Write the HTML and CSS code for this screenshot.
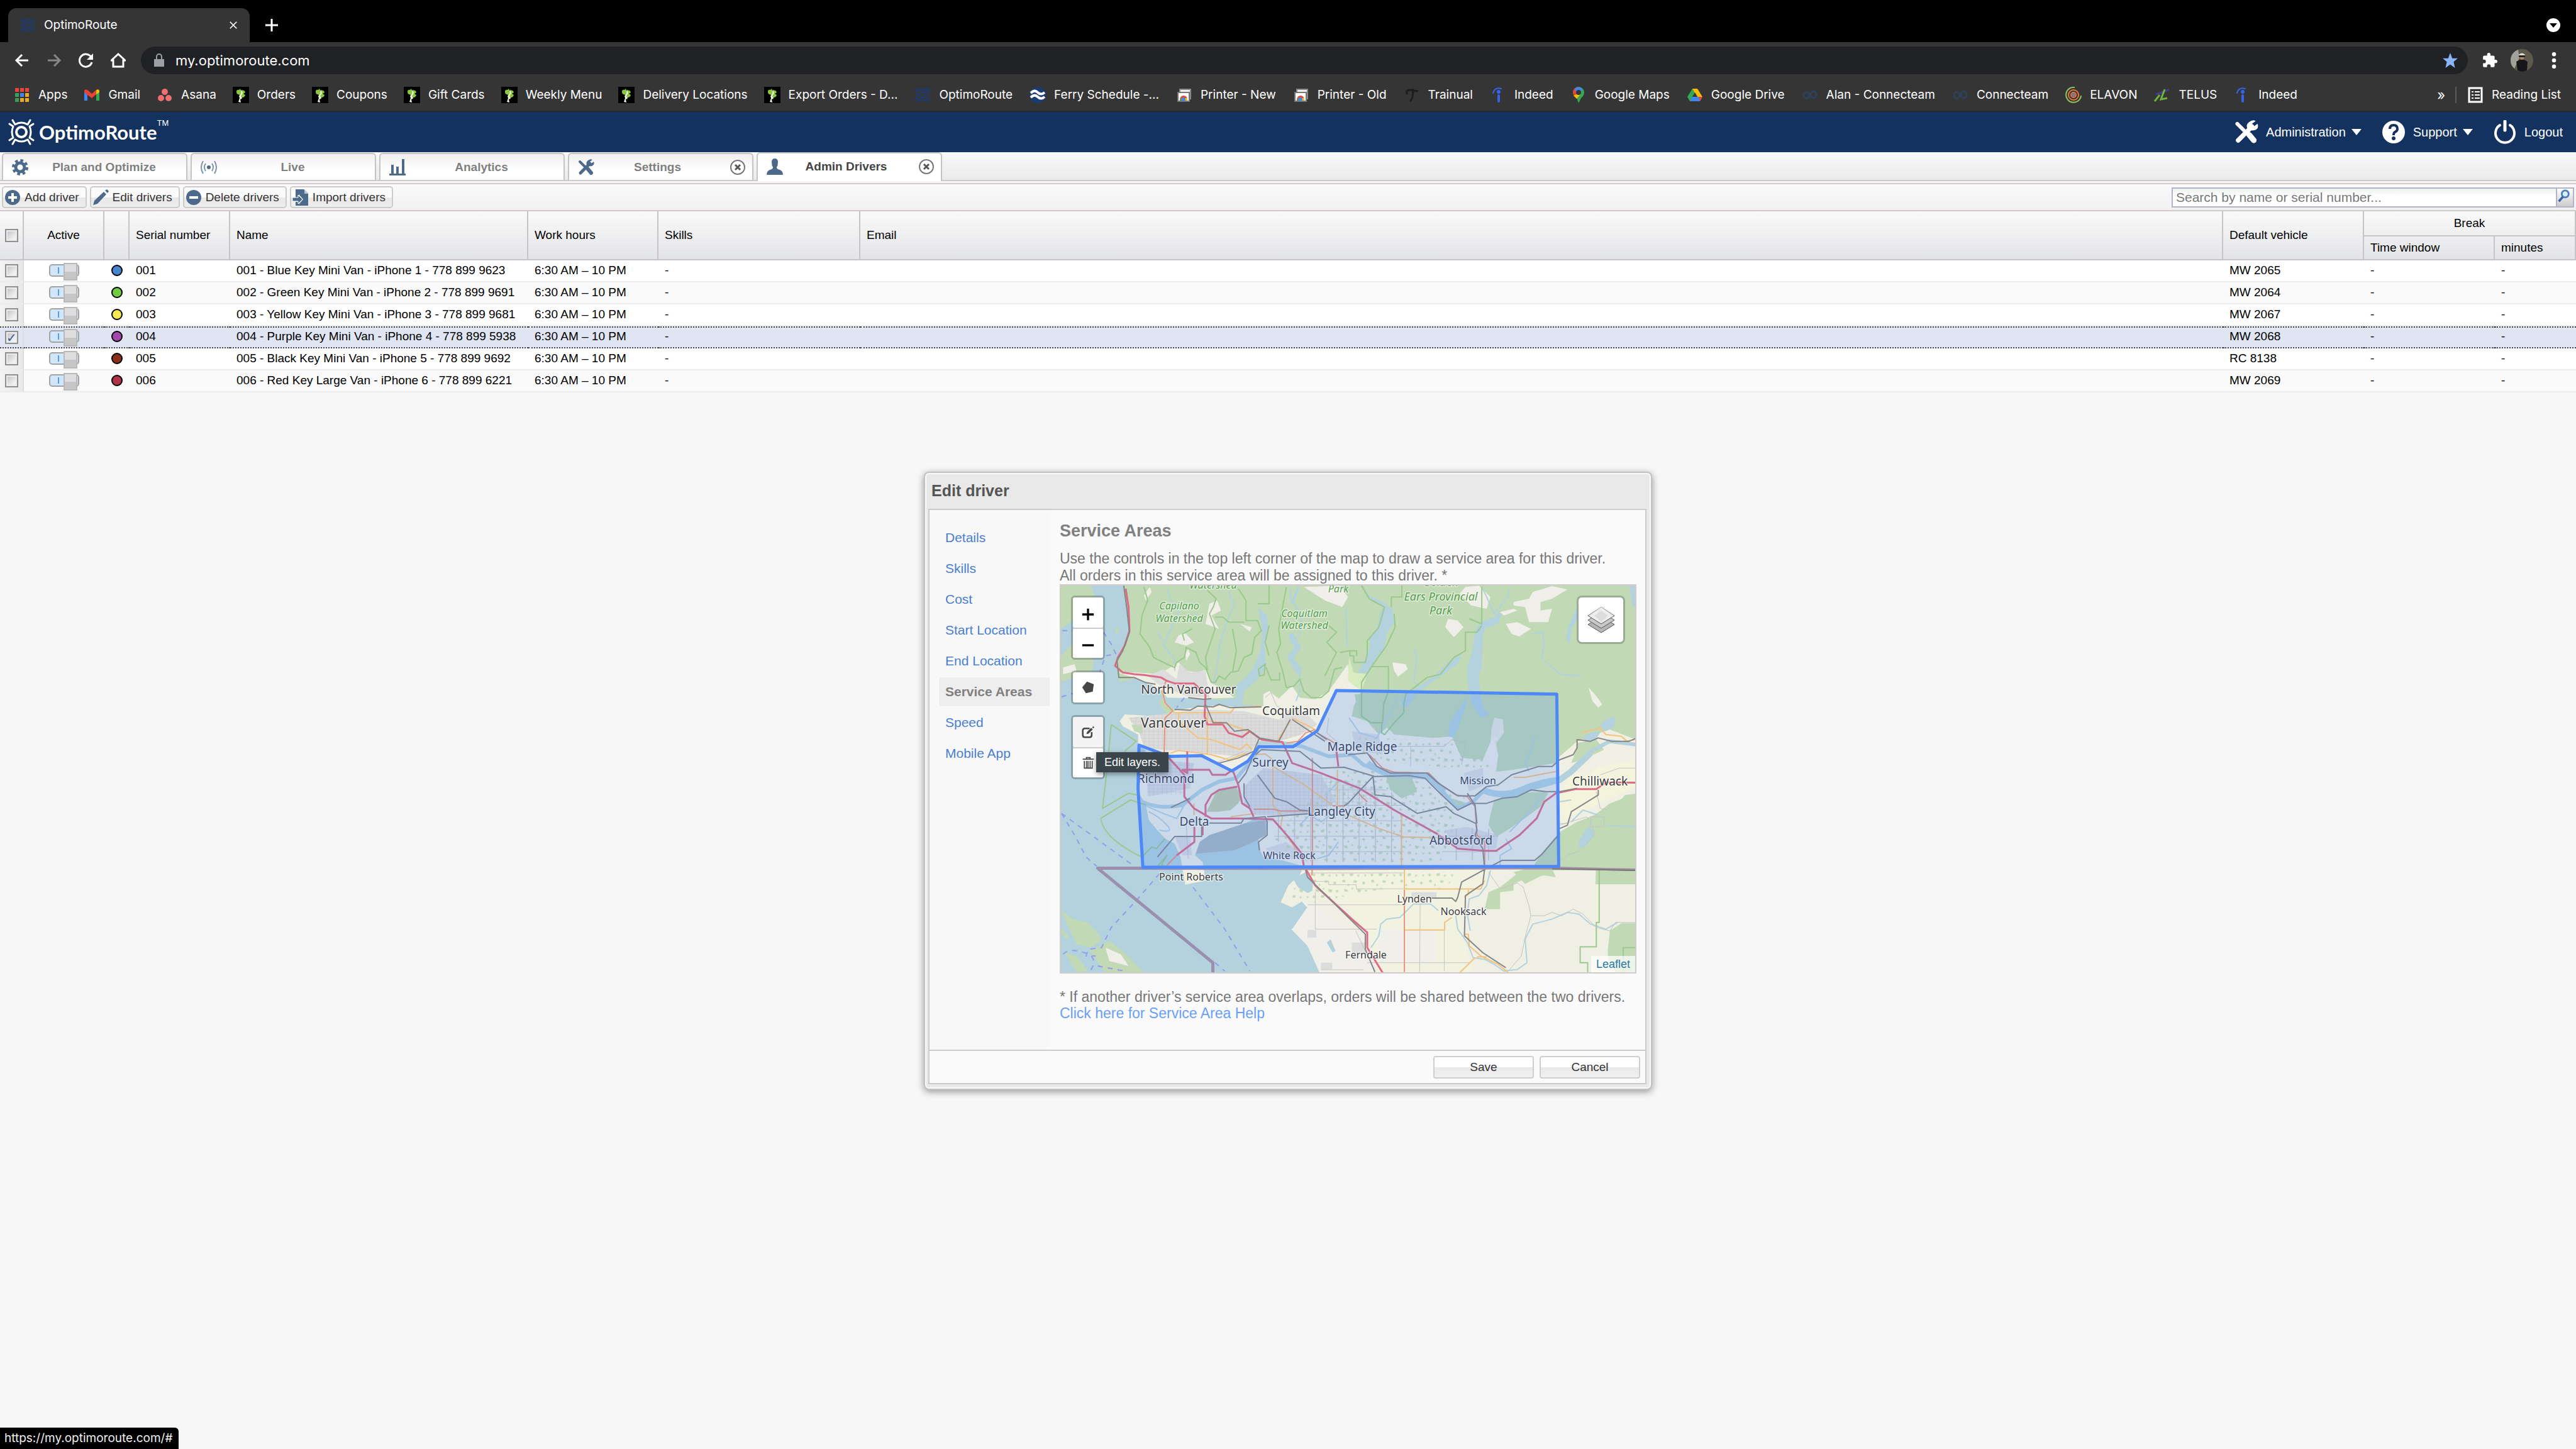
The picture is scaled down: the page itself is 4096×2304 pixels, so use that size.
FILE: index.html
```html
<!DOCTYPE html>
<html lang="en">
<head>
<meta charset="utf-8">
<title>OptimoRoute</title>
<link rel="stylesheet" href="styles.css">
</head>
<body>
<svg class="defs" aria-hidden="true">
  <symbol id="i-optimo" viewBox="0 0 42 42"><g fill="none" stroke="currentColor" stroke-width="3" stroke-linecap="round" stroke-linejoin="round"><circle cx="21" cy="21" r="8" stroke-width="4"/><path d="M7 2L11 9Q21 3 31 9L35 2M7 40L11 33Q21 39 31 33L35 40M2 8L8 12Q4 21 8 30L2 34M40 8L34 12Q38 21 34 30L40 34"/></g></symbol>
  <symbol id="i-q" viewBox="0 0 26 26"><path d="M0 0h26v26H0z" fill="#000"/><path d="M6 8Q6 4 10 5L12 3 13 6Q19 4 20 9L17 11 20 13Q19 17 15 17L14 20 11 17 11 13 9 12Q6 12 6 8Z" fill="#8cc63f"/><path d="M14 4L16 10 13 15 15 18 12 20 13 25 9 24 11 18 10 15 13 11Z" fill="#e8f0dc"/></symbol>
  <symbol id="i-tools" viewBox="0 0 26 26"><g fill="none" stroke="currentColor" stroke-linecap="round"><path d="M4 22L19 7" stroke-width="5"/><path d="M3 4L11 12" stroke-width="4"/><path d="M16 16L21 22" stroke-width="6"/></g><path d="M16 2Q20-1 23 1L19 4 21 7 25 4Q27 9 22 11 17 12 14 9 12 5 16 2Z" fill="currentColor"/></symbol>
  <symbol id="i-print" viewBox="0 0 26 26"><path d="M6 4h17v15H6z" fill="#eee" stroke="#888" stroke-width="2"/><path d="M3 9h18v14H3z" fill="#fff" stroke="#777" stroke-width="2"/><path d="M6 22Q6 14 12 14T18 22Z" fill="#dd4b3e"/><path d="M6 22l3-5 3 5z" fill="#3aa757"/><path d="M13 18h5v4h-5z" fill="#f4c20d"/><circle cx="12" cy="20" r="3" fill="#4286f5"/></symbol>
  <symbol id="i-indeed" viewBox="0 0 26 26"><g fill="none" stroke="#3564e8" stroke-linecap="round"><path d="M14 14V23" stroke-width="4"/><path d="M5 10Q8 0 18 3" stroke-width="2"/></g><circle cx="14" cy="8" r="3" fill="#3564e8"/></symbol>
  <symbol id="i-loop" viewBox="0 0 26 26"><path d="M13 13Q9 6 5 9 1 13 5 18 9 21 13 13 17 5 21 8 25 13 21 17 17 20 13 13Z" fill="none" stroke="#2d4157" stroke-width="3"/></symbol>
  <symbol id="i-close" viewBox="0 0 26 26"><circle cx="13" cy="13" r="11" fill="#fff" stroke="#777" stroke-width="2"/><path d="M9 9L17 17M17 9L9 17" stroke="#555" stroke-width="3"/></symbol>
  <symbol id="i-tri" viewBox="0 0 16 12"><path d="M0 1H16L8 11Z" fill="#fff"/></symbol>
</svg>

<header class="chrome">
  <div class="tabstrip">
    <div class="btab"><svg class="fav navy"><use href="#i-optimo"/></svg><span>OptimoRoute</span>
      <button class="ib" aria-label="Close tab"><svg viewBox="0 0 16 16" width="14" height="14"><path d="M2 2L14 14M14 2L2 14" stroke="#fff" stroke-width="2"/></svg></button></div>
    <button class="ib newtab" aria-label="New tab"><svg viewBox="0 0 20 20" width="20" height="20"><path d="M10 0V20M0 10H20" stroke="#fff" stroke-width="3"/></svg></button>
    <button class="ib tabsearch" aria-label="Search tabs"><svg viewBox="0 0 24 24" width="24" height="24"><circle cx="12" cy="12" r="11" fill="#fff"/><path d="M6 9H18L12 16Z" fill="#000"/></svg></button>
  </div>
  <div class="navbar">
    <button class="ib" aria-label="Back"><svg viewBox="0 0 24 24"><path d="M22 12H3M12 3L3 12 12 21" fill="none" stroke="#fff" stroke-width="3"/></svg></button>
    <button class="ib" aria-label="Forward"><svg viewBox="0 0 24 24"><path d="M2 12H21M12 3L21 12 12 21" fill="none" stroke="#888" stroke-width="3"/></svg></button>
    <button class="ib" aria-label="Reload"><svg viewBox="0 0 24 24"><path d="M20 7A10 10 0 1 0 21 15" fill="none" stroke="#fff" stroke-width="3"/><path d="M23 1V11H13Z" fill="#fff"/></svg></button>
    <button class="ib" aria-label="Home"><svg viewBox="0 0 24 24"><path d="M1 12L12 2 23 12H20V22H4V12Z" fill="none" stroke="#fff" stroke-width="3"/></svg></button>
    <div class="omni">
      <svg viewBox="0 0 18 22" width="18" height="22"><path d="M1 9h16v12H1z" fill="#9aa0a6"/><path d="M5 9V5a4 4 0 0 1 8 0v4" fill="none" stroke="#9aa0a6" stroke-width="2"/></svg>
      <input class="url" type="text" aria-label="Address" value="my.optimoroute.com">
      <svg viewBox="0 0 24 24" width="26" height="26"><path d="M12 1L15 9 23 9 17 14 19 23 12 18 5 23 7 14 1 9 9 9Z" fill="#8ab4f8"/></svg>
    </div>
    <div class="navend">
      <button class="ib" aria-label="Extensions"><svg viewBox="0 0 24 24"><path d="M20.500 11H19V7a2 2 0 0 0-2-2h-4V3.500a2.500 2.500 0 0 0-5 0V5H4a2 2 0 0 0-2 2v3.800h1.500a2.700 2.700 0 0 1 0 5.400H2V20a2 2 0 0 0 2 2h3.800v-1.500a2.700 2.700 0 0 1 5.400 0V22H17a2 2 0 0 0 2-2v-4h1.500a2.500 2.500 0 0 0 0-5z" fill="#fff"/></svg></button>
      <button class="ib" aria-label="Profile"><svg class="avatar" viewBox="0 0 36 36"><circle cx="18" cy="18" r="18" fill="#5d5a4c"/><path d="M0 18A18 18 0 0 1 12 1L14 14 6 31Q0 26 0 18Z" fill="#a3a19c"/><path d="M9 20Q18 13 27 20L26 34Q18 38 11 34Z" fill="#17161a"/><ellipse cx="18" cy="12" rx="4" ry="5" fill="#b08468"/><path d="M13 9Q18 4 23 9V11H13Z" fill="#ddd"/><path d="M13 10h10v3H13z" fill="#222"/></svg></button>
      <button class="ib" aria-label="Menu"><svg viewBox="0 0 24 24"><g fill="#fff"><circle cx="12" cy="3" r="3"/><circle cx="12" cy="12" r="3"/><circle cx="12" cy="21" r="3"/></g></svg></button>
    </div>
  </div>
  <nav class="bookmarks" aria-label="Bookmarks">
    <a href="#"><svg class="bi" viewBox="0 0 26 26"><g fill="#e8453c"><path d="M2 2h6v6H2zM10 2h6v6h-6zM18 2h6v6h-6z"/></g><path d="M2 10h6v6H2zM2 18h6v6H2z" fill="#3a9e57"/><path d="M10 10h6v6h-6z" fill="#4587f0"/><path d="M18 10h6v6h-6zM10 18h6v6h-6zM18 18h6v6h-6z" fill="#e8a92e"/></svg>Apps</a>
    <a href="#"><svg class="bi" viewBox="0 0 26 26"><path d="M1 6V22H6V10Z" fill="#4285f4"/><path d="M25 6V22H20V10Z" fill="#34a853"/><path d="M1 6Q2 3 6 5L13 11 20 5V12L13 18 1 9Z" fill="#ea4335"/><path d="M20 5Q24 3 25 6V9L20 12Z" fill="#fbbc04"/></svg>Gmail</a>
    <a href="#"><svg class="bi" viewBox="0 0 26 26"><g fill="#ee6f6f"><circle cx="13" cy="8" r="5"/><circle cx="7" cy="18" r="5"/><circle cx="19" cy="18" r="5"/></g></svg>Asana</a>
    <a href="#"><svg class="bi"><use href="#i-q"/></svg>Orders</a>
    <a href="#"><svg class="bi"><use href="#i-q"/></svg>Coupons</a>
    <a href="#"><svg class="bi"><use href="#i-q"/></svg>Gift Cards</a>
    <a href="#"><svg class="bi"><use href="#i-q"/></svg>Weekly Menu</a>
    <a href="#"><svg class="bi"><use href="#i-q"/></svg>Delivery Locations</a>
    <a href="#"><svg class="bi"><use href="#i-q"/></svg>Export Orders - D...</a>
    <a href="#"><svg class="bi navy"><use href="#i-optimo"/></svg>OptimoRoute</a>
    <a href="#"><svg class="bi" viewBox="0 0 26 26"><circle cx="13" cy="13" r="13" fill="#1b3c70"/><path d="M2 10Q8 4 13 9T24 9M2 17Q8 11 13 16T24 16" fill="none" stroke="#fff" stroke-width="4"/></svg>Ferry Schedule -...</a>
    <a href="#"><svg class="bi"><use href="#i-print"/></svg>Printer - New</a>
    <a href="#"><svg class="bi"><use href="#i-print"/></svg>Printer - Old</a>
    <a href="#"><svg class="bi" viewBox="0 0 26 26"><path d="M6 12Q2 6 9 5L23 7M15 3Q15 20 10 23" fill="none" stroke="#1d1d1d" stroke-width="3"/></svg>Trainual</a>
    <a href="#"><svg class="bi"><use href="#i-indeed"/></svg>Indeed</a>
    <a href="#"><svg class="bi" viewBox="0 0 26 26"><path d="M4 9A9 9 0 0 1 22 9Q22 14 17 18L13 26 10 18Q4 14 4 9Z" fill="#34a853"/><path d="M4 9A9 9 0 0 1 13 0L13 9 6 15Z" fill="#ea4335"/><path d="M7 3A9 9 0 0 1 20 4L10 12Z" fill="#4285f4"/><path d="M10 12L5 14 10 19 16 12Z" fill="#fbbc04"/><circle cx="13" cy="9" r="4" fill="#353535"/></svg>Google Maps</a>
    <a href="#"><svg class="bi" viewBox="0 0 26 26"><path d="M9 3H17L9 17 5 23 1 16Z" fill="#34a853"/><path d="M9 3H17L25 16H17Z" fill="#fbbc04"/><path d="M5 23L9 16H25L21 23Z" fill="#4285f4"/><path d="M19 16H25L21 23Z" fill="#ea4335"/><path d="M13 9L9 16H17Z" fill="#353535"/></svg>Google Drive</a>
    <a href="#"><svg class="bi"><use href="#i-loop"/></svg>Alan - Connecteam</a>
    <a href="#"><svg class="bi"><use href="#i-loop"/></svg>Connecteam</a>
    <a href="#"><svg class="bi" viewBox="0 0 26 26"><g fill="none"><path d="M15 1A12 12 0 1 0 25 14" stroke="#93c65a" stroke-width="2"/><circle cx="13" cy="13" r="8" stroke="#e8743b" stroke-width="2"/><circle cx="13" cy="13" r="4" stroke="#e8743b" stroke-width="2"/></g><circle cx="13" cy="13" r="3" fill="#7b7b8a"/></svg>ELAVON</a>
    <a href="#"><svg class="bi" viewBox="0 0 26 26"><path d="M3 12L16 8 24 4" stroke="#4b3a86" stroke-width="3" fill="none"/><path d="M17 4L11 20 21 18M1 23L9 13" stroke="#6cb33f" stroke-width="3" fill="none"/></svg>TELUS</a>
    <a href="#"><svg class="bi"><use href="#i-indeed"/></svg>Indeed</a>
    <span class="more">»</span>
    <a class="reading" href="#"><svg class="bi" viewBox="0 0 26 26"><path d="M3 2h20v22H3z" fill="none" stroke="#fff" stroke-width="3"/><path d="M7 8h3M7 13h3M7 18h3M12 8h8M12 13h8M12 18h8" stroke="#fff" stroke-width="2"/></svg>Reading List</a>
  </nav>
</header>

<div class="app">
  <header class="brandbar">
    <a class="brand" href="#"><svg class="logo"><use href="#i-optimo"/></svg><span class="brandname">OptimoRoute</span><span class="tm">TM</span></a>
    <div class="account">
      <button><svg class="ai"><use href="#i-tools"/></svg>Administration<svg class="tri"><use href="#i-tri"/></svg></button>
      <button><svg class="ai" viewBox="0 0 38 38"><circle cx="19" cy="19" r="18" fill="#fff"/><path d="M13 14Q13 8 19 8T25 14Q25 17 21 19 19 20 19 24" fill="none" stroke="#13325f" stroke-width="4"/><circle cx="19" cy="29" r="3" fill="#13325f"/></svg>Support<svg class="tri"><use href="#i-tri"/></svg></button>
      <button><svg class="ai" viewBox="0 0 38 38"><path d="M11 8A15 15 0 1 0 27 8" fill="none" stroke="#fff" stroke-width="4" stroke-linecap="round"/><path d="M19 2V16" stroke="#fff" stroke-width="5" stroke-linecap="round"/></svg>Logout</button>
    </div>
  </header>

  <nav class="tabs" aria-label="Sections">
    <div class="tab"><svg class="ti" viewBox="0 0 26 26"><circle cx="13" cy="13" r="7" fill="none" stroke="currentColor" stroke-width="5"/><circle cx="13" cy="13" r="11" fill="none" stroke="currentColor" stroke-width="4" stroke-dasharray="4.600 4.040"/></svg><a href="#">Plan and Optimize</a></div>
    <div class="tab"><svg class="ti" viewBox="0 0 26 26"><circle cx="13" cy="13" r="3" fill="currentColor"/><path d="M8 7Q4 13 8 19M18 7Q22 13 18 19M4 3Q-2 13 4 23M22 3Q28 13 22 23" fill="none" stroke="#7c93ab" stroke-width="2"/></svg><a href="#">Live</a></div>
    <div class="tab"><svg class="ti" viewBox="0 0 26 26"><path d="M0 25H26M5 25V9M13 25V12M22 25V0" stroke="currentColor" stroke-width="4" fill="none"/></svg><a href="#">Analytics</a></div>
    <div class="tab"><svg class="ti"><use href="#i-tools"/></svg><a href="#">Settings</a><button class="ib" aria-label="Close Settings"><svg class="tx"><use href="#i-close"/></svg></button></div>
    <div class="tab active"><svg class="ti" viewBox="0 0 26 26"><path d="M13 0Q18 0 18 6 18 11 16 14 16 17 21 18 26 20 26 26H0Q0 20 5 18 10 17 10 14 8 11 8 6 8 0 13 0Z" fill="currentColor"/></svg><a href="#">Admin Drivers</a><button class="ib" aria-label="Close Admin Drivers"><svg class="tx"><use href="#i-close"/></svg></button></div>
  </nav>

  <div class="toolbar">
    <button class="tb"><svg class="ti" viewBox="0 0 26 26"><circle cx="13" cy="13" r="12" fill="currentColor"/><path d="M13 6V20M6 13H20" stroke="#fff" stroke-width="4"/></svg>Add driver</button>
    <button class="tb"><svg class="ti" viewBox="0 0 26 26"><path d="M1 25L3 18 18 4 22 8 8 23Z" fill="currentColor"/><path d="M20 2L23 0 26 3 24 6Z" fill="currentColor"/></svg>Edit drivers</button>
    <button class="tb"><svg class="ti" viewBox="0 0 26 26"><circle cx="13" cy="13" r="12" fill="currentColor"/><path d="M6 13H20" stroke="#fff" stroke-width="4"/></svg>Delete drivers</button>
    <button class="tb"><svg class="ti" viewBox="0 0 26 26"><path d="M5 0H18L25 7V26H5V20H10V24L17 16 10 8V13H5Z" fill="currentColor"/><path d="M19 0V7H26" fill="#b9c5d2"/><path d="M0 13H9V9L16 16 9 23V19H0Z" fill="currentColor" stroke="#fff"/></svg>Import drivers</button>
    <div class="search"><input type="text" aria-label="Search drivers" placeholder="Search by name or serial number..."><button aria-label="Search"><svg viewBox="0 0 24 24" width="22" height="24"><circle cx="14" cy="8" r="6" fill="#dcecf8" stroke="#4a7cc0" stroke-width="3"/><path d="M10 13L3 21" stroke="#3a62ab" stroke-width="4"/></svg></button></div>
  </div>

  <table class="grid">
    <colgroup><col class="c-check"><col class="c-active"><col class="c-dot"><col class="c-serial"><col class="c-name"><col class="c-hours"><col class="c-skills"><col><col class="c-vehicle"><col class="c-window"><col class="c-min"></colgroup>
    <thead>
      <tr><th rowspan="2" class="ck"><input type="checkbox" aria-label="Select all"></th><th rowspan="2" class="mid">Active</th><th rowspan="2"></th><th rowspan="2">Serial number</th><th rowspan="2">Name</th><th rowspan="2">Work hours</th><th rowspan="2">Skills</th><th rowspan="2">Email</th><th rowspan="2">Default vehicle</th><th colspan="2" class="mid group">Break</th></tr>
      <tr><th>Time window</th><th>minutes</th></tr>
    </thead>
    <tbody>
      <tr><td class="ck"><input type="checkbox" aria-label="Select 001"></td><td class="mid"><input class="sw" type="checkbox" role="switch" checked aria-label="001 active"></td><td class="mid"><i class="dot blue"></i></td><td>001</td><td>001 - Blue Key Mini Van - iPhone 1 - 778 899 9623</td><td>6:30 AM – 10 PM</td><td>-</td><td></td><td>MW 2065</td><td>-</td><td>-</td></tr>
      <tr><td class="ck"><input type="checkbox" aria-label="Select 002"></td><td class="mid"><input class="sw" type="checkbox" role="switch" checked aria-label="002 active"></td><td class="mid"><i class="dot green"></i></td><td>002</td><td>002 - Green Key Mini Van - iPhone 2 - 778 899 9691</td><td>6:30 AM – 10 PM</td><td>-</td><td></td><td>MW 2064</td><td>-</td><td>-</td></tr>
      <tr><td class="ck"><input type="checkbox" aria-label="Select 003"></td><td class="mid"><input class="sw" type="checkbox" role="switch" checked aria-label="003 active"></td><td class="mid"><i class="dot yellow"></i></td><td>003</td><td>003 - Yellow Key Mini Van - iPhone 3 - 778 899 9681</td><td>6:30 AM – 10 PM</td><td>-</td><td></td><td>MW 2067</td><td>-</td><td>-</td></tr>
      <tr class="sel"><td class="ck"><input type="checkbox" checked aria-label="Select 004"></td><td class="mid"><input class="sw" type="checkbox" role="switch" checked aria-label="004 active"></td><td class="mid"><i class="dot purple"></i></td><td>004</td><td>004 - Purple Key Mini Van - iPhone 4 - 778 899 5938</td><td>6:30 AM – 10 PM</td><td>-</td><td></td><td>MW 2068</td><td>-</td><td>-</td></tr>
      <tr><td class="ck"><input type="checkbox" aria-label="Select 005"></td><td class="mid"><input class="sw" type="checkbox" role="switch" checked aria-label="005 active"></td><td class="mid"><i class="dot brown"></i></td><td>005</td><td>005 - Black Key Mini Van - iPhone 5 - 778 899 9692</td><td>6:30 AM – 10 PM</td><td>-</td><td></td><td>RC 8138</td><td>-</td><td>-</td></tr>
      <tr><td class="ck"><input type="checkbox" aria-label="Select 006"></td><td class="mid"><input class="sw" type="checkbox" role="switch" checked aria-label="006 active"></td><td class="mid"><i class="dot red"></i></td><td>006</td><td>006 - Red Key Large Van - iPhone 6 - 778 899 6221</td><td>6:30 AM – 10 PM</td><td>-</td><td></td><td>MW 2069</td><td>-</td><td>-</td></tr>
    </tbody>
  </table>

  <div class="overlay">
    <section class="dialog" role="dialog" aria-labelledby="dlg-title">
      <h1 id="dlg-title">Edit driver</h1>
      <div class="dbody">
        <div class="dcols">
          <nav class="side" aria-label="Driver sections"><a href="#">Details</a><a href="#">Skills</a><a href="#">Cost</a><a href="#">Start Location</a><a href="#">End Location</a><a href="#" class="on">Service Areas</a><a href="#">Speed</a><a href="#">Mobile App</a></nav>
          <div class="main">
            <h2>Service Areas</h2>
            <p class="intro">Use the controls in the top left corner of the map to draw a service area for this driver.<br>All orders in this service area will be assigned to this driver. *</p>
            <div class="map">
<svg class="mapart" viewBox="0 0 913 615" preserveAspectRatio="xMidYMid slice">
  <defs>
    <pattern id="streets" width="46" height="40" patternUnits="userSpaceOnUse"><path d="M0 1H46M1 0V40M0 22H46M24 0V40" fill="none" stroke="#c6c6c6" stroke-width="3"/></pattern>
    <pattern id="rural" width="84" height="92" patternUnits="userSpaceOnUse"><path d="M0 2H84M2 0V92" fill="none" stroke="#c2c2c2" stroke-width="4"/></pattern>
    <pattern id="woods" width="150" height="130" patternUnits="userSpaceOnUse"><path d="M8 10l14-5 6 12-12 6zM40 30l8 4-4 9-8-3zM70 8l18 4-6 12-14-4zM112 22l10-6 8 10-9 8zM20 60l16 4 4 14-18-4zM62 52l7 6-6 7-6-6zM88 60l22 6-8 16-12-4zM130 66l12 4-6 12-10-6zM10 98l12 6-6 12-9-6zM48 100l18-4 2 14-16 4zM92 104l8 4-4 9-9-4zM124 102l14 6-10 9z" fill="#c1d9b5"/></pattern>
  </defs>
  <rect width="913" height="615" fill="#b3d2dd"/>
  <g transform="translate(-15 -19) scale(.3061 .2667)">
    <path fill="#c1d9b5" d="M375 60L395 180 410 340 380 440 335 520 345 620 360 645 440 625 520 665 565 690 575 740 640 735 800 745 880 755 960 740 955 670 1010 620 1045 570 1080 480 1095 380 1090 290 1070 200 1120 250 1125 330 1105 430 1115 560 1060 640 1000 700 990 780 1100 790 1000 800 870 785 760 795 650 815 620 800 580 745 555 760 575 800 600 840 540 850 380 840 355 880 370 910 450 960 450 1020 490 1055 475 1100 450 1300 490 1380 505 1470 550 1530 590 1580 640 1610 670 1690 695 1855 800 1830 785 1720 745 1680 770 1600 820 1560 1000 1490 1050 1465 1120 1475 1115 1560 1075 1580 1080 1640 1100 1690 1200 1710 1310 1745 1290 1795 1230 1860 1190 1960 1250 1990 1300 1955 1335 2000 1330 2060 1245 2120 1330 2220 1385 2260 1400 2400 3060 2400 3060 60Z"/>
    <path fill="#c1d9b5" d="M40 60H200L225 130 170 210 100 290 50 330ZM40 500L110 420 180 440 220 520 210 580 50 645ZM45 2000L110 2060 190 2080 245 2150 260 2190 200 2230 130 2210 100 2140ZM200 2250L300 2190 380 2260 440 2330 480 2380 280 2380ZM70 2260L130 2280 190 2370 130 2380ZM45 2110L90 2160 80 2180 45 2140ZM340 320L355 340 340 360 328 340Z"/>
    <path fill="#efefe4" d="M345 590L440 625 520 665 575 700 600 740 800 745 950 740 900 700 830 650 800 575 760 590 700 580 660 530 560 600 440 590ZM1100 790L1100 720 1130 700 1180 745 1250 670 1290 740 1370 750 1440 700 1540 540 1545 610 1640 600 1610 700 1570 790 1560 850 1640 880 1700 960 1740 920 1850 960 1980 980 2080 970 2130 1030 2240 1110 2290 980 2320 1080 2310 1180 2460 1160 2620 1130 2640 1090 2730 1000 2900 930 3060 1000 3060 1310 2980 1320 2900 1420 2750 1480 2640 1560 2500 1750 2400 1780 2460 1850 2600 1770 3060 1770 3060 2400 1400 2400 1385 2260 1330 2220 1245 2120 1330 2060 1335 2000 1300 1955 1250 1990 1190 1960 1230 1860 1290 1795 1310 1745 1200 1710 1100 1690 1080 1640 1075 1580 1115 1560 1120 1475 1050 1465 1000 1490 820 1560 770 1600 745 1680 785 1720 800 1830 695 1855 670 1690 640 1610 590 1580 550 1530 505 1470 490 1380 450 1300 475 1100 490 1055 450 1020 450 960 370 910 355 880 380 840 540 850 600 840 650 815 760 795 870 785 1000 800Z"/>
    <path fill="#f1f2df" d="M1340 1770H2260L2250 1870 2160 1920 2120 2060 2140 2180 2200 2400H1700L1640 2150 1540 2000 1330 1840Z"/>
    <path fill="#f0efe9" d="M1340 1970L1540 2110 1640 2160 1700 2400H1400L1330 2220 1250 2120ZM1690 2120H2000V2320H1700Z"/>
    <path fill="#dcdcdc" d="M500 610L580 570 650 630 665 540 720 590 800 580 820 740 700 730 560 665ZM400 860L640 830 760 810 1000 820 1180 870 1250 800 1330 840 1380 900 1300 960 1180 1000 1080 990 1020 1090 880 1080 480 1040 460 960ZM490 1110L740 1130 720 1280 500 1330ZM1000 1270L1100 1160 1400 1200 1480 1360 1330 1440 1060 1440 1000 1370ZM1110 1640L1220 1600 1330 1700 1200 1705ZM1560 940L1700 960 1720 1080 1580 1050ZM2040 1530L2160 1510 2320 1560 2310 1640 2110 1640ZM2140 1190L2240 1160 2250 1260 2170 1300ZM1870 1900H2000V1930H1870ZM2800 1230L2900 1140 2940 1180 2850 1260ZM1330 2125H1375V2170H1330ZM1400 2320H1458V2360H1400ZM1560 2200H1630V2260H1560ZM640 1570L720 1570 730 1680 680 1680Z"/>
    <path fill="url(#streets)" opacity=".7" d="M400 860L640 830 760 830 1000 840 1180 870 1250 860 1330 900 1300 960 1180 1000 1080 990 1020 1090 880 1080 480 1040 460 960ZM490 1110L740 1130 680 1318 500 1318ZM1000 1270L1100 1160 1400 1200 1700 1280 1700 1400 1480 1400 1330 1440 1060 1440 1000 1370Z"/>
    <path fill="url(#rural)" d="M1100 1480L1500 1260 1660 1250 1820 1330 1830 1720H1350L1180 1600ZM2030 1520H2320V1710H2030Z"/>
    <path fill="url(#woods)" d="M1140 1580L1500 1180 1660 1150 2150 1330 2020 1720H1330ZM1340 1780L2120 1780 2040 1880 1880 1860 1600 1900 1400 1960 1250 1960 1260 1850ZM1600 980L2200 1000 2300 1180 2080 1160 1600 1100Z"/>
    <path fill="#f0eee8" d="M1310 80L1500 72 1540 140 1510 200 1420 160ZM820 180L860 160 880 220 830 250 870 330 800 300ZM660 370L690 350 740 410 700 430 640 410ZM710 450L720 480 700 520 695 480ZM480 130L510 80 520 110 490 160ZM980 300L1040 320 1030 345ZM2150 80L2220 72 2280 140 2260 210 2180 190 2120 120ZM2060 270L2110 280 2140 320 2090 380 2045 320ZM2400 170L2480 150 2500 110 2600 75 2680 95 2600 150 2540 170 2540 220 2600 210 2580 290 2480 290 2460 200 2400 190ZM2360 300L2420 290 2490 330 2430 375 2390 360ZM2330 230L2400 210 2420 220 2350 250ZM1770 530L1840 540 1850 570 1800 615 1780 580ZM2790 680L2830 730 2860 780 2840 800 2810 760ZM2290 880L2340 880 2350 960 2300 1000ZM60 560L120 540 130 580 60 600ZM280 2230L360 2270 400 2340 300 2310Z"/>
    <path fill="#c1d9b5" d="M1575 720L1780 700 2620 720 2625 1080 2500 1130 2400 1170 2320 1180 2345 1000 2290 960 2240 1110 2130 1100 2080 970 1980 980 1780 960 1730 900 1660 890 1590 850Z"/>
    <path fill="#f0eee8" opacity=".8" d="M2300 860L2345 870 2350 950 2310 1010 2320 1090 2300 1170 2250 1100 2280 1010 2285 930Z"/>
    <path fill="#c1d9b5" d="M2280 1440L2300 1350 2400 1310 2560 1300 2580 1310 2540 1390 2470 1450 2380 1520 2310 1570 2270 1500ZM2500 1750L2550 1660 2640 1540 2730 1480 2820 1440 2900 1370 3040 1310V1755H2600ZM2330 1870L2440 1770 2600 1760 2620 1810 2560 1800 2480 1810 2400 1850 2400 1890 2330 1900V2000H2250L2270 1900ZM2828 1770H3040V1852H2825ZM2890 2240L2900 2130 2960 2085H3040V2380H2930L2890 2300ZM1730 1180L1860 1180 1900 1300 1820 1340 1760 1290ZM2080 1340L2160 1370 2110 1400ZM2730 1010L2830 990 2870 1050 2760 1110 2700 1130 2720 1070ZM415 900L470 910 475 955 430 940Z"/>
    <path fill="#d8ecc0" d="M1545 500L1570 590 1640 600 1610 700 1540 640Z"/>
    <path fill="#f4f3dc" d="M2700 1180L2790 1200 2840 1150 3040 1110V1270L2960 1310 2860 1360 2800 1400 2700 1440 2650 1500 2640 1330Z"/>
    <path fill="#c3cfa8" d="M860 1290L960 1270 985 1340 970 1370 930 1410 870 1420 805 1420Z"/>
    <path fill="#a9b8bd" d="M770 1600L820 1560 1000 1490 1110 1470 1115 1560 1050 1600 950 1650 750 1670Z"/>

    <g fill="#b3d2dd">
      <path d="M1610 60L1650 130 1720 170 1770 210 1780 290 1740 360 1730 440 1690 500 1640 590 1590 595 1620 530 1655 440 1650 380 1690 330 1705 250 1720 190 1660 160 1610 60Z"/>
      <path d="M2230 290L2300 260 2320 230 2340 240 2320 300 2250 330 2240 380 2235 560 2220 600 2225 700 2240 800 2275 840 2230 860 2180 770 2165 680 2160 560 2190 440 2200 340Z"/>
      <path d="M2160 740L2140 830 2120 900 2090 980 2060 970 2070 890 2110 810ZM1820 740L1990 610 2060 530 2130 480 2110 540 2010 620 1900 710 1850 790 1820 800ZM3000 72H3040V200L3020 200ZM2730 200L2735 270 2700 330 2690 420 2672 380 2690 300ZM2780 1520L2800 1500 2810 1430 2790 1520 2740 1640 2740 1590ZM2800 1510L2820 1550 2780 1620 2735 1640 2760 1570ZM2760 980L2810 940 2850 950 2820 1000 2770 1000ZM2880 870L2930 850 2920 920 2870 940 2850 900ZM1430 2200L1450 2180 1475 2250 1460 2260ZM1255 1820L1320 1780 1360 1830 1355 1890 1330 1905 1280 1870ZM1240 180L1280 70 1290 80 1255 180Z"/>
    </g>
    <g class="ln" stroke="#b3d2dd">
      <path stroke-width="6" d="M470 1360Q560 1410 680 1380L780 1290 870 1240 960 1220 1050 1100 1080 1010 1200 1010 1300 1030 1440 1090 1560 1080 1620 1140 1730 1190 1900 1200 1980 1230 2040 1310 2110 1400 2190 1360 2240 1300 2380 1330 2500 1280 2630 1240 2720 1160 2800 1060 2900 1000 3040 1020"/>
      <path stroke-width="10" d="M2240 1290Q2340 1340 2440 1290T2640 1230L2700 1180 2800 1070M1640 1130Q1720 1200 1800 1200T1960 1210L2040 1300"/>
      <path stroke-width="9" d="M1240 360L1280 440 1240 500 1290 590"/>
      <path stroke-width="2" d="M600 80L615 150 660 230 620 330 580 430 640 510 640 580M550 350L580 410M920 110L950 180 910 290 870 440 860 560 840 660M1240 80V140L1300 250 1290 360 1240 420M1290 580L1290 700 1270 760M1530 210L1535 440M2500 360L2550 350 2560 420 2545 500 2600 560 2640 600 2750 610M2240 90L2300 240 2370 140 2380 80M1880 450L1900 500 1880 640 1910 670M2510 970L2490 1060 2460 1130 2480 1180M2700 1480L2760 1410 2840 1440M2880 1500L3040 1510M2640 1360L2700 1350M1660 2230L1700 2160 1710 2090 1740 2060 1810 2050 1880 1970 1970 1970 2010 2010M2100 2040L2110 2120 2160 2200 2190 2290 2250 2300 2300 2330 2350 2370 2420 2360 2470 2320 2460 2180 2500 2090 2600 2060 2680 2020 2740 2030 2800 2090 2880 2120 2940 2080M2280 1770L2260 1860 2220 1920 2170 1940 2160 2030 2175 2130M1440 1300L1500 1230 1540 1260M1290 1500L1340 1440 1400 1480 1450 1440M1380 1700L1440 1680 1490 1600M2360 1580L2390 1640 2330 1680 2330 1740M2380 1540L2500 1400 2560 1310M505 1420Q560 1450 600 1500T560 1530M480 1380L580 1430 650 1460 690 1380M1545 860L1600 950 1690 980 1800 740M1640 1150L1700 1170M760 230L730 290"/>
    </g>
    <g class="ln" stroke="#9ac88d" stroke-width="2">
      <path d="M480 80L500 160 470 250 460 360 510 440 530 500 600 540 640 560 650 530 690 500 700 440 750 470 770 530 800 560 830 650 850 650 870 610 900 630 930 590 970 580 1000 500 1040 480 1055 380 1090 340 1070 280 1010 280 1010 160 970 90M810 100L855 150 840 200 820 240 850 330 820 430 800 500 810 580M850 260L890 260 920 290 1000 290M1070 180L1130 180V70M1220 80L1200 200 1180 330 1190 420 1170 470 1200 580 1220 680 1260 670 1290 630 1310 700 1350 740 1400 740 1440 700 1470 570 1510 560M1500 470L1550 460M1420 610L1480 470 1430 410 1480 350 1440 310M1110 540L1075 570 1080 610 1105 605ZM1115 560L1140 635H1185V590M940 590L960 460 940 330M690 400L680 360 730 330M1130 490L1110 410 1130 310M1610 70L1650 150 1730 200 1700 320 1640 400 1640 480 1630 530H1570V490H1550V460H1585V490M1765 200V140H1820V70M1780 240L1785 320 1740 430 1690 510 1660 560 1610 650V850L1660 890H1720L1725 780 1750 700V555H1660M2235 80V300L2170 270M2235 310L2210 350H2150V460L2090 500 2020 600 1950 620 1840 720 1830 780 1830 830 1780 890 1730 960 1715 950V890M310 900L290 1150 265 1400 400 1310 445 1320M310 900L440 1000 380 1060M255 1460L410 1350 490 1380M255 1460Q270 1540 340 1600T470 1690L520 1630 545 1640 590 1580M540 1760L600 1680 570 1740 620 1750M2845 1770V2080H2830V2225H2746V2320H2785V2376M2970 2376V2230H3040"/>
    </g>
    <g class="ln" stroke="#c4c4c4" stroke-width="1"><path d="M1340 1785H1830M1360 1835H1440V1855H1583V1880H1830M1370 1900V2120H1690M1330 1975H1840M1915 1970L1912 2376M2040 2130V2370M1640 2320H2170M1580 2130L1680 2370M1400 2362H1620M2270 1780L2330 1880 2420 1845 2450 1870 2480 1980 2490 2040 2460 2170 2440 2280 2380 2360M2490 2040L2560 2040 2600 2020 2650 2040 2710 2000 2760 2030 2830 2110 2900 2130 2930 2080H3040M1700 1030H2040L2080 990 2150 1010 2130 1140M1866 1030V1150M1440 860L1430 950 1490 1010M2640 1500L2780 1450 2810 1500 2820 1560 2750 1650 2680 1680 2620 1740M2830 1300L2850 1400 2890 1410 2900 1380M2800 1450H2870V1510H2800ZM2850 1200L2950 1160 3040 1160M2630 1490H2680L2690 1470M1110 740L1140 710 1170 790 1250 830M850 1130L1000 1060M700 1500L710 1700"/></g>
    <g class="ln" stroke="#f2c27d" stroke-width="2"><path d="M630 830H930L950 800 1090 790M660 830V880L760 980 830 990 980 1050 1015 1015 1040 1050M810 830V1080M820 880L900 890 1000 930 1050 950M620 1070L660 1055 830 1080 920 1110 1010 1070M1250 860L1370 930M1170 1000L1240 880M1060 1080L1110 1075 1150 1110V1380L1200 1450 1190 1510 1280 1660M1150 1150L1300 1250 1460 1380M1485 1170V1380M1540 1440L1700 1520 1830 1570 2000 1575M1818 1440V1750L1833 1765V1880H2230L2250 1830M2165 1885V1910L2145 1930M1833 2125H2042V2080L2080 2050M2145 2150H2165L2170 2220 2230 2280 2320 2330 2370 2376M2210 2285H2260M2200 2290L2120 2380M2400 1215H2460L2620 1180M2750 950L2850 920 2880 960 2960 970 2990 1000 3030 990M740 1370V1440M930 1450L1060 1430"/></g>
    <g class="ln" stroke="#e8957c" stroke-width="2"><path d="M595 640L575 700 590 770 630 820 590 860 585 1070M1355 1100V1700L1353 1800M1050 1405H1150L1190 1415H1340M1640 1360L1610 1330 1590 1300M1833 1885V2376M1370 930L1320 950 1280 1000 1220 1010M1380 950L1470 1010M600 1740L650 1680 740 1600M1650 1080L1720 1160 1780 1185 1960 1190 2010 1250 2100 1320 2160 1330 2200 1390 2210 1560 2250 1600V1760M1460 1385H1520"/></g>
    <g class="ln" stroke="#dc6b86" stroke-width="3"><path d="M385 90L400 200 405 340 380 430 345 500 330 550 370 590 430 600 480 605 570 620 600 640 640 655 740 655 800 720 795 850 810 900H890L920 950 990 975 1030 940 1090 990 1200 1005 1250 1130 1400 1190 1600 1280 1780 1410 2000 1550 2110 1640 2250 1653H2310L2430 1560 2520 1460 2560 1360 2620 1310 2720 1285 2830 1285 2880 1245 3040 1247M610 1100L690 1200V1330L740 1400 830 1460 990 1460 1150 1465 1230 1570 1300 1670 1310 1740 1370 1860 1560 2060 1640 2140V2230L1720 2380M705 1060V1190L680 1170H820L835 1200H905L940 1170 970 1260 990 1370 1030 1400 1050 1450M965 1270L870 1290 830 1320 800 1380V1450M742 1510V1600L650 1680M785 1500V1560M1480 1060L1490 1150"/></g>
    <g class="ln" stroke="#868687" stroke-width="2"><path d="M375 72L390 200 405 350 370 460 340 520 350 620 430 620 490 650 540 660M710 740L790 750 830 745M640 810L720 815 760 790 840 795 870 780 930 800 1090 795M800 780L840 890 910 890 950 940 1020 930 1080 980 1180 1000 1240 870M1080 980L1050 1060 970 1100 870 1130M1250 870L1420 1000M1060 1080L1090 1050 1290 1060 1400 1160 1520 1155 1680 1210 1860 1205 1940 1220 2000 1290 2110 1410 2180 1370H2260L2340 1340 2420 1330 2490 1290 2570 1300H2640L2730 1280M1380 950L1430 990M1540 1080L1640 1070 1690 1150 1760 1190 1950 1190 2010 1250 2110 1325H2200L2260 1270 2320 1260 2390 1200 2530 1150 2600 1150 2640 1110 2710 1080 2730 1040 2730 990 2800 1000 2840 980 2910 1000 3000 1000 3040 980M1540 1370L1670 1210 1680 1320 1760 1330 1900 1430 2050 1390 2090 1430 2205 1490 2210 1530 2200 1560 2240 1640 2250 1760 2240 1850 2150 1920 2145 2160 2240 2260 2360 2350M1540 1370L1520 1385M2160 1310L2200 1380 2210 1490M1070 1200L1160 1340 1220 1360 1290 1410 1340 1415M820 1488H985L1000 1460 1110 1450 1120 1480V1560L1075 1600 1080 1650M550 1690L640 1567H780V1500M970 1250L1010 1190 1050 1080M1000 1250V1330L1030 1390M2840 1290V1320L2700 1420 2680 1500 2640 1520M2640 1550L2550 1670 2510 1710H2340L2240 1770 2130 1840 2110 1930 2100 1955 2080 1935H1970M1320 1770L1330 1810 1480 1980 1630 2150V2240L1680 2376M620 1395L720 1340M1120 1450L1350 1430"/></g>
    <g class="ln" stroke="#949cec" stroke-width="2" stroke-dasharray="8 8"><path d="M52 1430L430 1745M52 1430L120 1560 180 1690 235 1745M560 1790L440 1950 310 2110 260 2230 190 2240 180 2280 230 2280M735 1870L900 2120 1030 2370M850 2320L900 2370M270 350L310 420 335 480 280 490 250 590M55 340H110M52 735L110 715M690 740L650 800M60 2270Q90 2230 170 2260T200 2370M240 2340L380 2370"/></g>
    <g class="ln" stroke="#9a8fae" stroke-width="5"><path d="M1310 1758L240 1757 838 2320V2380"/></g>
    <path class="ln" stroke="#a58fa5" stroke-width="4" d="M1310 1760L2640 1756 3040 1766"/><path class="ln" stroke="#777" stroke-width="2" d="M2600 1760L3040 1770"/>
  </g>
  <g class="parks"><text x="242" y="5">Watershed</text><text x="188" y="38">Capilano</text><text x="188" y="58">Watershed</text><text x="387" y="50">Coquitlam</text><text x="387" y="69">Watershed</text><text x="441" y="11">Park</text><g class="big"><text x="604" y="1">Golden</text><text x="604" y="24">Ears Provincial</text><text x="604" y="46">Park</text></g></g>
  <g class="towns"><text x="203" y="172">North Vancouver</text><text class="city" x="179" y="226">Vancouver</text><text x="366" y="206">Coquitlam</text><text x="333" y="288">Surrey</text><text x="167" y="314">Richmond</text><text x="212" y="382">Delta</text><text x="479" y="263">Maple Ridge</text><text x="446" y="366">Langley City</text><text x="636" y="412">Abbotsford</text><text x="857" y="318">Chilliwack</text>
    <g class="small"><text x="663" y="316">Mission</text><text x="363" y="435">White Rock</text><text x="207" y="469">Point Roberts</text><text x="562" y="504">Lynden</text><text x="640" y="524">Nooksack</text><text x="485" y="593">Ferndale</text></g></g>
  <g transform="translate(-231 -195) scale(.7653 .6429)"><path class="area" d="M464 698L527 726 594 724 657 762 690 738 713 702H784L834 663 874 563 1332 572 1336 998 472 1000 462 805Z"/></g>
</svg>
              <div class="ctl">
                <div class="bar zoom"><button aria-label="Zoom in"><svg viewBox="0 0 24 24"><path d="M12 1V23M1 12H23" stroke="#000" stroke-width="4"/></svg></button><button aria-label="Zoom out"><svg viewBox="0 0 24 24"><path d="M1 12H23" stroke="#000" stroke-width="4"/></svg></button></div>
                <div class="bar"><button aria-label="Draw a polygon"><svg viewBox="0 0 24 24"><path d="M10 1L23 6 21 20 8 23 1 12Z" fill="#464646"/></svg></button></div>
                <div class="bar"><button class="hover" aria-label="Edit layers"><svg viewBox="0 0 24 24"><path d="M15 5H6Q2 5 2 9V18Q2 22 6 22H15Q19 22 19 18V12" fill="none" stroke="#464646" stroke-width="3"/><path d="M9 16L10 12 18 4 21 7 13 15ZM20 3L22 1 24 3 22 5Z" fill="#464646"/></svg></button><button aria-label="Delete layers"><svg viewBox="0 0 24 24"><path d="M2 5H23M9 5V2H16V5M5 8V22H20V8M9 8V22M12 8V22M16 8V22" fill="none" stroke="#464646" stroke-width="2"/></svg></button></div>
              </div>
              <button class="layers" aria-label="Layers"><svg viewBox="0 0 44 44"><g stroke="#555"><path d="M1 30L22 17 43 30 22 43Z" fill="#b5b5b5"/><path d="M1 23L22 10 43 23 22 36Z" fill="#c8c8c8"/><path d="M1 16L22 2 43 16 22 29Z" fill="#eee"/></g><path d="M0 15L22 1 44 15" fill="none" stroke="#f2f2f2" stroke-width="2"/><path d="M11 16L22 8 33 16 22 26Z" fill="#dcdcdc"/></svg></button>
              <span class="tip" role="tooltip">Edit layers.</span>
              <a class="leaflet" href="#">Leaflet</a>
            </div>
            <p class="note">* If another driver’s service area overlaps, orders will be shared between the two drivers.<br><a href="#">Click here for Service Area Help</a></p>
          </div>
        </div>
        <footer><button>Save</button><button>Cancel</button></footer>
      </div>
    </section>
  </div>
  <div class="status">https://my.optimoroute.com/#</div>
</div>
</body>
</html>
```
FILE: styles.css
```css
* { box-sizing: border-box; }
body { margin: 0; min-height: 100vh; display: flex; flex-direction: column; background: #f7f7f7; font: 19px/24px "Liberation Sans", Arial, sans-serif; color: #000; }
button, input { font: inherit; color: inherit; }
a { text-decoration: none; color: inherit; }
h1, h2, p { margin: 0; }
.defs { display: none; }
.ib { background: none; border: 0; padding: 0; display: flex; align-items: center; justify-content: center; }
.navy { color: #1b3c78; }

/* Browser frame */
.chrome { background: #353535; color: #fff; font-family: Inter, sans-serif; border-bottom: 2px solid #282828; }
.tabstrip { height: 67px; background: #000; padding: 13px 24px 0 13px; display: flex; align-items: stretch; }
.btab { width: 384px; background: #353535; border-radius: 13px 13px 0 0; padding: 0 19px; display: flex; align-items: center; gap: 14px; }
.btab .ib { margin-left: auto; }
.fav { width: 24px; height: 24px; }
.newtab { margin-left: 25px; }
.tabsearch { margin-left: auto; }
.navbar { display: flex; align-items: center; height: 58px; padding: 0 22px 0 23px; }
.navbar > .ib { width: 24px; margin-right: 27px; }
.navbar > .ib svg { width: 24px; height: 24px; }
.navbar > .ib:nth-child(4) { margin-right: 24px; }
.omni { flex: 1; height: 44px; border-radius: 22px; background: #202124; display: flex; align-items: center; gap: 17px; padding: 0 15px 0 20px; }
.url { flex: 1; background: none; border: 0; padding: 0; font-size: 22px; color: #fff; }
.navend { display: flex; align-items: center; gap: 20px; margin-left: 22px; }
.navend svg { width: 26px; height: 26px; }
.navend .avatar { width: 36px; height: 36px; }
.bookmarks { display: flex; align-items: center; height: 51px; padding: 1px 24px 0 22px; gap: 26px; white-space: nowrap; }
.bookmarks a { display: flex; align-items: center; gap: 13px; }
.bookmarks a:nth-child(n+10) { margin-left: 1px; }
.bi { width: 26px; height: 26px; flex: none; }
.more { margin-left: auto; font-size: 22px; }
.bookmarks a.reading { border-left: 2px solid #5a5a5a; padding-left: 17px; margin-left: -10px; }

/* Application header */
.app { flex: 1; position: relative; display: flex; flex-direction: column; }
.brandbar { height: 64px; background: #13325f; color: #fff; display: flex; align-items: center; justify-content: space-between; padding: 0 21px 0 13px; }
.brand { display: flex; align-items: center; }
.logo { width: 42px; height: 42px; }
.brandname { font: 700 31px/42px Lato, sans-serif; margin-left: 7px; }
.tm { font-size: 13px; line-height: 14px; align-self: flex-start; }
.account { display: flex; gap: 32px; font-size: 20px; }
.account button { display: flex; align-items: center; background: none; border: 0; padding: 0; }
.ai { width: 38px; height: 38px; margin-right: 12px; }
.tri { width: 16px; height: 12px; margin-left: 9px; }

.tabs { display: flex; align-items: flex-end; gap: 5px; height: 46px; padding: 0 3px; background: linear-gradient(#f8f8f8, #ebebeb); border-bottom: 2px solid #cfcaca; }
.tab { width: 295px; height: 43px; display: flex; align-items: center; padding: 0 10px 0 14px; border: 2px solid #c6c3c3; border-bottom: 0; border-radius: 6px 6px 0 0; background: linear-gradient(#f1eeed, #fff 60%); color: #4d6a8c; }
.tab a { flex: 1; text-align: center; font-weight: 700; color: #808080; }
.tab.active { background: #fff; height: 46px; margin-bottom: -2px; padding-bottom: 3px; }
.tab.active a { color: #444; }
.tab .ib { margin-left: 14px; }
.ti, .tx { width: 26px; height: 26px; flex: none; }

.toolbar { height: 45px; display: flex; align-items: center; gap: 5px; padding: 0 3px; background: linear-gradient(#fafafa, #f1f1f1); border-top: 2px solid #d2caca; border-bottom: 2px solid #d2caca; margin-top: 3px; }
.tb { height: 35px; display: flex; align-items: center; gap: 6px; padding: 0 10px 0 2px; border: 2px solid #cbcbcb; border-radius: 5px; background: linear-gradient(#fbfbfb 50%, #e8e8e8 51%, #eee); color: #333; }
.tb .ti { color: #4d6a8c; }
.search { margin-left: auto; width: 640px; height: 32px; display: flex; border: 2px solid #b3b4c8; background: #fff; }
.search input { flex: 1; border: 0; padding: 0 5px; font-size: 21px; background: linear-gradient(#eef0f0, #fff 40%); }
.search input::placeholder { color: #777; }
.search button { width: 27px; padding: 0; border: 0; border-left: 2px solid #b3b4c8; background: linear-gradient(#fff, #ccc); display: flex; }

/* Driver grid */
.grid { width: 100%; table-layout: fixed; border-collapse: separate; border-spacing: 0; }
.c-check { width: 38px; } .c-active { width: 128px; } .c-dot { width: 40px; } .c-serial { width: 160px; } .c-name { width: 474px; } .c-hours { width: 207px; } .c-skills { width: 321px; } .c-vehicle { width: 224px; } .c-window { width: 208px; } .c-min { width: 129px; }
.grid thead { background: linear-gradient(#fafafa, #e2e3e6); }
.grid th { font-weight: 400; text-align: left; padding: 0 9px 1px 10px; height: 38px; border-right: 2px solid #c5c5c8; border-bottom: 2px solid #c5c5c8; }
.grid .group { height: 40px; }
.grid td { height: 35px; padding: 0 9px 2px 10px; border-bottom: 2px solid #ececec; white-space: nowrap; background: #fff; line-height: 20px; }
.grid tr:nth-child(even) td { background: #fafafa; }
.grid .mid { text-align: center; padding-left: 0; padding-right: 0; }
.grid .ck { padding: 0 0 0 8px; border-right: 2px solid #ddd; }
.grid th.ck { border-right-color: #c5c5c8; }
.grid tbody .ck, .grid tr:nth-child(even) .ck { background: linear-gradient(90deg, #f2f2f2, #e9e9e9); }
.grid tr.sel td, .grid tr.sel .ck { background: #dfe5f3; border-top: 2px dotted #444; border-bottom: 2px dotted #444; padding-bottom: 4px; }
.grid tr.sel .ck { padding-bottom: 0; }
.ck input { appearance: none; display: block; width: 21px; height: 21px; margin: 0; border: 2px solid #8e8f8f; background: linear-gradient(135deg, #b9bec4, #f2f2f2 75%); box-shadow: inset 0 0 0 2px #ececec; position: relative; }
.ck input:checked::after { content: "✓"; position: absolute; inset: 0; font: 700 20px/18px "DejaVu Sans"; color: #4a5b9a; text-align: center; }
.sw { appearance: none; display: inline-block; vertical-align: middle; width: 48px; height: 20px; margin: 0; border: 2px solid #a3a3a3; border-radius: 5px; background: linear-gradient(#5a9be8, #5a9be8) 12px 3px / 2px 10px no-repeat, #cfe6fb; position: relative; }
.sw::after { content: ""; position: absolute; right: 1px; top: -4px; width: 18px; height: 24px; border: 2px solid #b9b9b9; background: linear-gradient(#dedede 50%, #c6c6c6 51%); }
.dot { display: inline-block; vertical-align: middle; width: 18px; height: 18px; border-radius: 50%; border: 2px solid #000; }
.blue { background: #4487d0; } .green { background: #70cc3c; } .yellow { background: #f5e850; } .purple { background: #a347ad; } .brown { background: #8a2f1a; } .red { background: #b13349; }

/* Edit driver dialog */
.overlay { position: absolute; inset: 0; display: flex; align-items: center; justify-content: center; }
.dialog { width: 1158px; padding: 0 7px 7px 5px; border: 2px solid #c2c2c2; border-radius: 8px; background: #e9e9e9; box-shadow: inset 0 0 0 2px #fafafa, 0 3px 12px rgba(0,0,0,.4); }
h1 { font-size: 25px; line-height: 57px; color: #555; padding-left: 5px; }
.dbody { border: 2px solid #d0caca; background: #fafafa; }
.dcols { display: flex; }
.side { width: 191px; padding: 21px 0 0 15px; display: flex; flex-direction: column; gap: 3px; background: #f8f8f8; font-size: 21px; color: #4a7fd0; }
.side a { height: 46px; line-height: 46px; padding-left: 10px; }
.side .on { background: #eee; font-weight: 700; color: #808080; }
.main { flex: 1; padding: 18px 14px 45px 16px; font-size: 23px; color: #777; }
h2 { font-size: 27px; line-height: 30px; color: #808080; margin-bottom: 16px; }
.intro { line-height: 27px; white-space: nowrap; }
.note { line-height: 26px; margin-top: 24px; white-space: nowrap; }
.note a { color: #6a9ff8; }
.dbody footer { display: flex; justify-content: flex-end; gap: 9px; padding: 8px 8px 7px; border-top: 2px solid #d0caca; }
footer button { width: 160px; height: 36px; border: 2px solid #cfcfcf; border-radius: 4px; background: linear-gradient(#fff 50%, #e9e9e9 51%, #f0f0f0); color: #333; }

.map { position: relative; border: 2px solid #d0caca; }
.mapart { display: block; width: 100%; height: auto; }
.ln { fill: none; }
.ln, .ln path { vector-effect: non-scaling-stroke; stroke-linejoin: round; }
.area { fill: #3f80ff; fill-opacity: .2; stroke: #4d88f8; stroke-width: 5px; stroke-linejoin: round; vector-effect: non-scaling-stroke; }
.towns, .parks { text-anchor: middle; font-family: "Noto Sans", sans-serif; font-size: 19px; paint-order: stroke; stroke-width: 3px; stroke-linejoin: round; }
.towns { fill: #3c3c3c; stroke: rgba(255,255,255,.6); }
.towns .city { font-size: 21px; }
.towns .small { font-size: 16px; }
.parks { font-style: italic; font-size: 16px; fill: #57a04e; stroke: rgba(255,255,255,.5); }
.parks .big { font-size: 18px; }
.ctl { position: absolute; left: 16px; top: 16px; display: flex; flex-direction: column; gap: 17px; }
.bar { border: 3px solid rgba(0,0,0,.22); border-radius: 6px; background-clip: padding-box; }
.bar button { display: flex; align-items: center; justify-content: center; width: 48px; height: 48px; padding: 0; border: 0; background: #fff; border-radius: 3px; }
.bar.zoom button { padding-top: 6px; }
.bar button + button { border-top: 2px solid #ccc; }
.bar .hover { background: #f4f4f4; }
.bar svg { width: 20px; height: 20px; }
.layers { position: absolute; right: 16px; top: 16px; width: 77px; height: 77px; padding: 0; border: 3px solid rgba(0,0,0,.2); border-radius: 8px; background: #fff; background-clip: padding-box; display: flex; align-items: center; justify-content: center; }
.layers svg { width: 44px; height: 44px; }
.tip { position: absolute; left: 56px; top: 265px; width: 115px; background: #3a464c; color: #fff; font-size: 18px; line-height: 32px; text-align: center; box-shadow: 0 3px 8px rgba(0,0,0,.4); }
.leaflet { position: absolute; right: 0; bottom: 0; padding: 0 8px; font-size: 18px; line-height: 26px; color: #2a78a8; background: rgba(255,255,255,.7); }

.status { position: absolute; left: 0; bottom: 0; padding: 0 10px 0 7px; height: 34px; line-height: 34px; background: #000; color: #eee; font-family: Inter, sans-serif; border-radius: 0 6px 0 0; }
```
